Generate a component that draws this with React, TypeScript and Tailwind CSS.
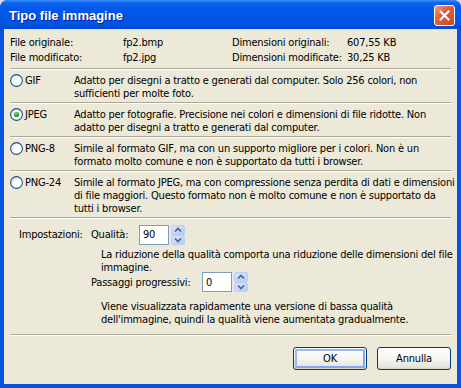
import React from "react";

function Radio({ checked }: { checked?: boolean }) {
  return (
    <svg width="13" height="13" viewBox="0 0 13 13" className="shrink-0">
      <defs>
        <linearGradient id="rg" x1="0" y1="0" x2="1" y2="1">
          <stop offset="0" stopColor="#dcdcd4" />
          <stop offset="0.5" stopColor="#ffffff" />
          <stop offset="1" stopColor="#ffffff" />
        </linearGradient>
        <radialGradient id="gd" cx="0.4" cy="0.35" r="0.7">
          <stop offset="0" stopColor="#7ce67a" />
          <stop offset="0.6" stopColor="#2ea52c" />
          <stop offset="1" stopColor="#1a8a1a" />
        </radialGradient>
      </defs>
      <circle cx="6.5" cy="6.5" r="5.9" fill="url(#rg)" stroke="#1c5180" strokeWidth="1.1" />
      {checked && <circle cx="6.5" cy="6.5" r="2.6" fill="url(#gd)" />}
    </svg>
  );
}

function Sep() {
  return (
    <div className="h-[2px] w-full border-t border-[#aca899] border-b border-b-white" />
  );
}

function Spin({ value, w }: { value: string; w: string }) {
  return (
    <div className="flex items-center gap-[2px]">
      <div className={`${w} h-[20px] border border-[#7f9db9] bg-white flex items-center pl-[3px] text-black`}>
        {value}
      </div>
      <svg width="14" height="20" viewBox="0 0 14 20">
        <defs>
          <linearGradient id="sb" x1="0" y1="0" x2="1" y2="1">
            <stop offset="0" stopColor="#dce6fd" />
            <stop offset="1" stopColor="#b5c9f7" />
          </linearGradient>
        </defs>
        <rect x="0.5" y="0.5" width="13" height="9" rx="1.5" fill="url(#sb)" stroke="#bccdf6" />
        <rect x="0.5" y="10.5" width="13" height="9" rx="1.5" fill="url(#sb)" stroke="#bccdf6" />
        <path d="M4 6.5 L7 3.5 L10 6.5" fill="none" stroke="#4d6185" strokeWidth="1.6" />
        <path d="M4 13.5 L7 16.5 L10 13.5" fill="none" stroke="#4d6185" strokeWidth="1.6" />
      </svg>
    </div>
  );
}

function Btn({ label, def }: { label: string; def?: boolean }) {
  return (
    <div className="w-[74px] h-[23px] rounded-[3px] border border-[#003c74] bg-[linear-gradient(to_bottom,#ffffff_0%,#f5f5f1_50%,#e6e5dd_90%,#d6d0c5_100%)] p-[1px]">
      <div
        className={`w-full h-full rounded-[2px] flex items-center justify-center text-black ${
          def ? "border-2 border-[#9bb8f3] border-b-[#87a6ee] border-r-[#87a6ee]" : ""
        }`}
      >
        {label}
      </div>
    </div>
  );
}

const rows: { label: string; checked?: boolean; lines: string[] }[] = [
  {
    label: "GIF",
    lines: [
      "Adatto per disegni a tratto e generati dal computer. Solo 256 colori, non",
      "sufficienti per molte foto.",
    ],
  },
  {
    label: "JPEG",
    checked: true,
    lines: [
      "Adatto per fotografie. Precisione nei colori e dimensioni di file ridotte. Non",
      "adatto per disegni a tratto e generati dal computer.",
    ],
  },
  {
    label: "PNG-8",
    lines: [
      "Simile al formato GIF, ma con un supporto migliore per i colori. Non è un",
      "formato molto comune e non è supportato da tutti i browser.",
    ],
  },
  {
    label: "PNG-24",
    lines: [
      "Simile al formato JPEG, ma con compressione senza perdita di dati e dimensioni",
      "di file maggiori. Questo formato non è molto comune e non è supportato da",
      "tutti i browser.",
    ],
  },
];

export default function App() {
  return (
    <div className="w-[461px] h-[388px] bg-[#d8d8d8]">
      <div className="w-full h-full flex flex-col rounded-t-[8px] overflow-hidden bg-[#0852e0] font-['DejaVu_Sans_Condensed','Liberation_Sans',sans-serif] text-[11px] leading-[13px] tracking-[-0.2px] text-black">
        {/* Title bar */}
        <div className="h-[29px] shrink-0 flex items-center justify-between pl-[9px] pr-[6px] bg-[linear-gradient(to_bottom,#3d8ff7_0%,#0a62ef_10%,#0057e8_35%,#0054e3_80%,#004ad4_100%)]">
          <span className="font-['Liberation_Sans',sans-serif] font-bold text-[13px] tracking-normal text-white [text-shadow:1px_1px_0_#0a1f8f] pt-[1px]">
            Tipo file immagine
          </span>
          <div className="w-[21px] h-[21px] rounded-[3px] border border-white bg-[linear-gradient(135deg,#f09a7a_0%,#e2623a_40%,#cc4318_100%)] flex items-center justify-center mt-[1px]">
            <svg width="11" height="11" viewBox="0 0 11 11">
              <path d="M1.5 1.5 L9.5 9.5 M9.5 1.5 L1.5 9.5" stroke="white" strokeWidth="2" strokeLinecap="square" />
            </svg>
          </div>
        </div>
        {/* Body */}
        <div className="flex-1 mx-[4px] mb-[4px] bg-[#ece9d8] px-[6px] flex flex-col">
          <div className="pt-[6px] grid grid-cols-[113px_109px_115px_1fr] leading-[15px]">
            <span>File originale:</span>
            <span>fp2.bmp</span>
            <span>Dimensioni originali:</span>
            <span>607,55 KB</span>
            <span>File modificato:</span>
            <span>fp2.jpg</span>
            <span>Dimensioni modificate:</span>
            <span>30,25 KB</span>
          </div>
          <div className="mt-[3px]">
            <Sep />
          </div>
          {rows.map((r) => (
            <div key={r.label}>
              <div className="flex pt-[4px] pb-[2px]">
                <div className="w-[64px] shrink-0 flex items-start gap-[2px]">
                  <Radio checked={r.checked} />
                  <span>{r.label}</span>
                </div>
                <div className="flex flex-col whitespace-nowrap">
                  {r.lines.map((l) => (
                    <span key={l}>{l}</span>
                  ))}
                </div>
              </div>
              <Sep />
            </div>
          ))}
          {/* Settings */}
          <div className="flex items-center h-[21px] mt-[5px]">
            <span className="w-[81px] pl-[9px] shrink-0">Impostazioni:</span>
            <span className="w-[48px] shrink-0">Qualità:</span>
            <Spin value="90" w="w-[30px]" />
          </div>
          <div className="pl-[91px] mt-[3px] flex flex-col whitespace-nowrap">
            <span>La riduzione della qualità comporta una riduzione delle dimensioni del file</span>
            <span>immagine.</span>
          </div>
          <div className="flex items-center h-[20px] pl-[81px] mt-[-2px]">
            <span className="w-[111px] shrink-0">Passaggi progressivi:</span>
            <Spin value="0" w="w-[30px]" />
          </div>
          <div className="pl-[91px] mt-[8px] flex flex-col whitespace-nowrap">
            <span>Viene visualizzata rapidamente una versione di bassa qualità</span>
            <span>dell'immagine, quindi la qualità viene aumentata gradualmente.</span>
          </div>
          <div className="mt-[8px]">
            <Sep />
          </div>
          <div className="flex justify-end gap-[10px] mt-[11px]">
            <Btn label="OK" def />
            <Btn label="Annulla" />
          </div>
        </div>
      </div>
    </div>
  );
}
